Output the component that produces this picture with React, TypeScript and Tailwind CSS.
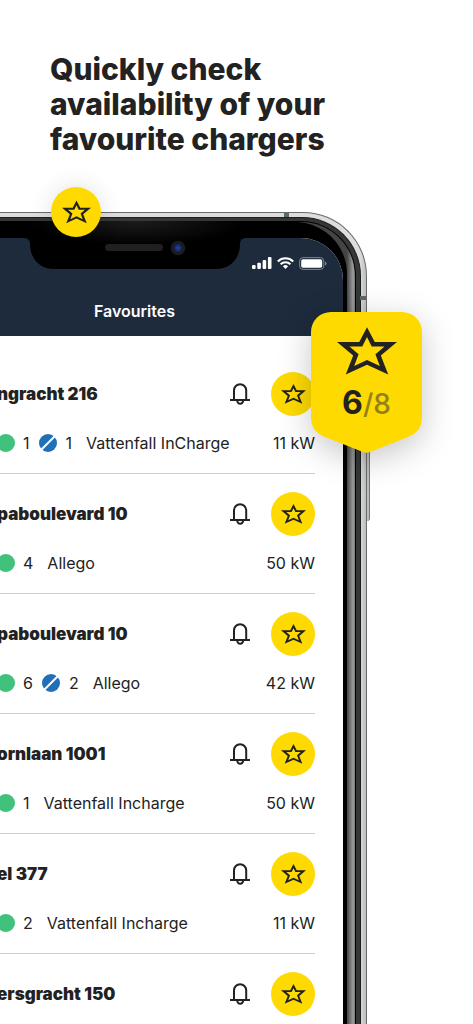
type Charger = {
  name: string;
  free: number;
  busy?: number;
  operator: string;
  power: string;
};

const chargers: Charger[] = [
  { name: "ngracht 216", free: 1, busy: 1, operator: "Vattenfall InCharge", power: "11 kW" },
  { name: "paboulevard 10", free: 4, operator: "Allego", power: "50 kW" },
  { name: "paboulevard 10", free: 6, busy: 2, operator: "Allego", power: "42 kW" },
  { name: "ornlaan 1001", free: 1, operator: "Vattenfall Incharge", power: "50 kW" },
  { name: "el 377", free: 2, operator: "Vattenfall Incharge", power: "11 kW" },
  { name: "ersgracht 150", free: 3, operator: "Vattenfall Incharge", power: "11 kW" },
];

function Star({ className }: { className: string }) {
  return (
    <svg viewBox="0 0 178 141" className={className} aria-hidden="true">
      <path
        fill="#222222"
        fillRule="evenodd"
        d="M89 0L112 44H178L130 84L152 140L89 111L26 140L48 84L0 44H66ZM89 29L103 57H141L114 80L127 115L89 97L51 115L64 80L37 57H75Z"
      />
    </svg>
  );
}

function Bell() {
  return (
    <svg viewBox="0 0 20 22" className="h-[22px] w-5" fill="none" stroke="#222222" strokeWidth="2" aria-hidden="true">
      <path d="M4 16.5V7.500a6.100 6.300 0 0 1 12.200 0v9M0 16.900h20.200M7.200 17.500a3 3.200 0 0 0 6 0" />
    </svg>
  );
}

function Busy() {
  return (
    <svg viewBox="0 0 18 18" className="size-[18px] shrink-0" aria-label="Occupied">
      <circle cx="9" cy="9" r="9" fill="#1f70b8" />
      <path d="M2 16L16 2" stroke="#fff" strokeWidth="2" />
    </svg>
  );
}

function StatusIcons() {
  return (
    <div className="flex h-3.5 items-center justify-end gap-[5px] pr-4">
      <svg viewBox="0 0 20 12" className="h-3 w-5" fill="#fff" aria-hidden="true">
        <rect x="0" y="8" width="3.6" height="4" rx="1" />
        <rect x="5.3" y="5.8" width="3.6" height="6.2" rx="1" />
        <rect x="10.6" y="3" width="3.6" height="9" rx="1" />
        <rect x="15.9" y="0" width="3.6" height="12" rx="1" />
      </svg>
      <svg viewBox="0 0 17 12" className="h-3 w-[17px]" fill="none" stroke="#fff" strokeWidth="2.1" aria-hidden="true">
        <path d="M.8 4.400a11 11 0 0 1 15.400 0M3.600 7.300a7 7 0 0 1 9.800 0" />
        <path d="M8.500 12L5.900 9.300a3.800 3.800 0 0 1 5.200 0Z" fill="#fff" stroke="none" />
      </svg>
      <svg viewBox="0 0 28 13" className="h-[13px] w-7" aria-hidden="true">
        <rect x=".6" y=".6" width="24.2" height="11.8" rx="3.4" fill="none" stroke="#7b8490" />
        <rect x="2.2" y="2.2" width="21" height="8.6" rx="1.8" fill="#fff" />
        <path d="M26 4.400q1.600.5 1.600 2.100T26 8.600Z" fill="#7b8490" />
      </svg>
    </div>
  );
}

function Notch() {
  return (
    <svg viewBox="0 0 222 48" className="absolute -top-[17px] left-1/2 h-12 w-[222px] -translate-x-1/2" aria-hidden="true">
      <defs>
        <radialGradient id="glass" cx=".5" cy="0" r=".5">
          <stop offset="0" stopColor="#1c1c1c" />
          <stop offset="1" stopColor="#000" />
        </radialGradient>
        <radialGradient id="lens">
          <stop offset="0" stopColor="#2747a8" />
          <stop offset="1" stopColor="#101d50" />
        </radialGradient>
      </defs>
      <path d="M0 0H222V17Q216 17 216 23C216 38 206 48 192 48H30C16 48 6 38 6 23Q6 17 0 17Z" fill="url(#glass)" />
      <rect x="81" y="23" width="58" height="7" rx="3.5" fill="#202020" />
      <circle cx="154" cy="27" r="7.3" fill="#1b1b1d" />
      <circle cx="154" cy="27" r="4.3" fill="url(#lens)" />
    </svg>
  );
}

function Row({ charger }: { charger: Charger }) {
  return (
    <li className="border-b border-[#cfcfcf] py-[18px]">
      <div className="flex h-11 items-center">
        <h2 className="flex-1 text-[17px] leading-6 font-black whitespace-nowrap">{charger.name}</h2>
        <button type="button" aria-label="Notify me">
          <Bell />
        </button>
        <button
          type="button"
          aria-label="Remove favourite"
          className="ml-[21px] flex size-11 items-center justify-center rounded-full bg-[#ffda00]"
        >
          <Star className="h-5 w-[25px]" />
        </button>
      </div>
      <div className="mt-[15px] flex h-6 items-center text-base leading-6 whitespace-nowrap">
        <span className="size-[18px] shrink-0 rounded-full bg-[#40c17c]" />
        <span className="ml-2">{charger.free}</span>
        {charger.busy !== undefined && (
          <>
            <span className="ml-[9px] flex">
              <Busy />
            </span>
            <span className="ml-[9px]">{charger.busy}</span>
          </>
        )}
        <span className="ml-3.5 flex-1">{charger.operator}</span>
        <span>{charger.power}</span>
      </div>
    </li>
  );
}

function Badge() {
  return (
    <div className="absolute top-[100px] -right-[55px] h-[141px] w-[111px]">
      <svg
        viewBox="0 0 111 141"
        className="absolute inset-0 h-full w-full drop-shadow-[0_8px_16px_rgba(0,0,0,0.22)]"
        aria-hidden="true"
      >
        <path
          d="M20 0H91A20 20 0 0 1 111 20V105C111 116 106 121 97 125L59 140Q55.5 141.500 52 140L14 125C5 121 0 116 0 105V20A20 20 0 0 1 20 0Z"
          fill="#ffda00"
        />
      </svg>
      <div className="relative flex flex-col items-center pt-[15px]">
        <Star className="h-12 w-[60px]" />
        <p className="mt-2.5 flex items-baseline leading-9">
          <span className="text-[32px] font-bold">6</span>
          <span className="text-[28px] font-medium text-[#92811a]">/8</span>
        </p>
      </div>
    </div>
  );
}

export default function App() {
  return (
    <main className="h-screen overflow-hidden bg-white pt-[52px] font-['Inter',sans-serif] text-[#222222]">
      <h1 className="pl-[50px] text-[30px] leading-[35px] font-extrabold">
        Quickly check
        <br />
        availability of your
        <br />
        favourite chargers
      </h1>

      <div className="relative mt-[55px] mr-[106px] -ml-[98px]">
        <span className="absolute top-[220px] -right-[3px] h-[89px] w-[3px] rounded-r-sm border-r border-[#777777] bg-[#bdbdbd]" />
        <div className="relative rounded-t-[64px] border-x border-t border-[#6b6b6b] bg-[linear-gradient(to_left,#bdbdbd,#dedcdd_6px)] px-[5px] pt-1">
          <span className="absolute top-0 right-[77px] h-1 w-[5px] bg-[#5a6b67]" />
          <span className="absolute top-[83px] right-0 h-1 w-[6px] bg-[#5a6b67]" />
          <div className="rounded-t-[59px] border-x border-t border-[#1d1f1f] bg-[#343837] px-1 pt-[3px]">
            <div className="rounded-t-[55px] border-x border-t border-black bg-[linear-gradient(to_left,#777777,#9c9c9c_2px,#707070_5px,#444444_8px)] px-2">
              <div className="rounded-t-[52px] bg-black px-1 pt-4">
                <div className="relative rounded-t-[42px] bg-white">
                  <header className="rounded-t-[42px] bg-[#1d2b3d] pt-[18px] pb-[13px]">
                    <StatusIcons />
                    <p className="mt-[29px] text-center text-base leading-6 font-semibold text-white">Favourites</p>
                  </header>
                  <Notch />
                  <ul className="pt-[18px] pr-7 pl-[71px]">
                    {chargers.map((charger, index) => (
                      <Row key={index} charger={charger} />
                    ))}
                  </ul>
                </div>
              </div>
            </div>
          </div>
        </div>

        <span className="absolute -top-[25px] left-[149px] flex size-[50px] items-center justify-center rounded-full bg-[#ffda00] shadow-[0_0_24px_rgba(0,0,0,0.12)]">
          <Star className="h-6 w-[29px]" />
        </span>
        <Badge />
      </div>
    </main>
  );
}
